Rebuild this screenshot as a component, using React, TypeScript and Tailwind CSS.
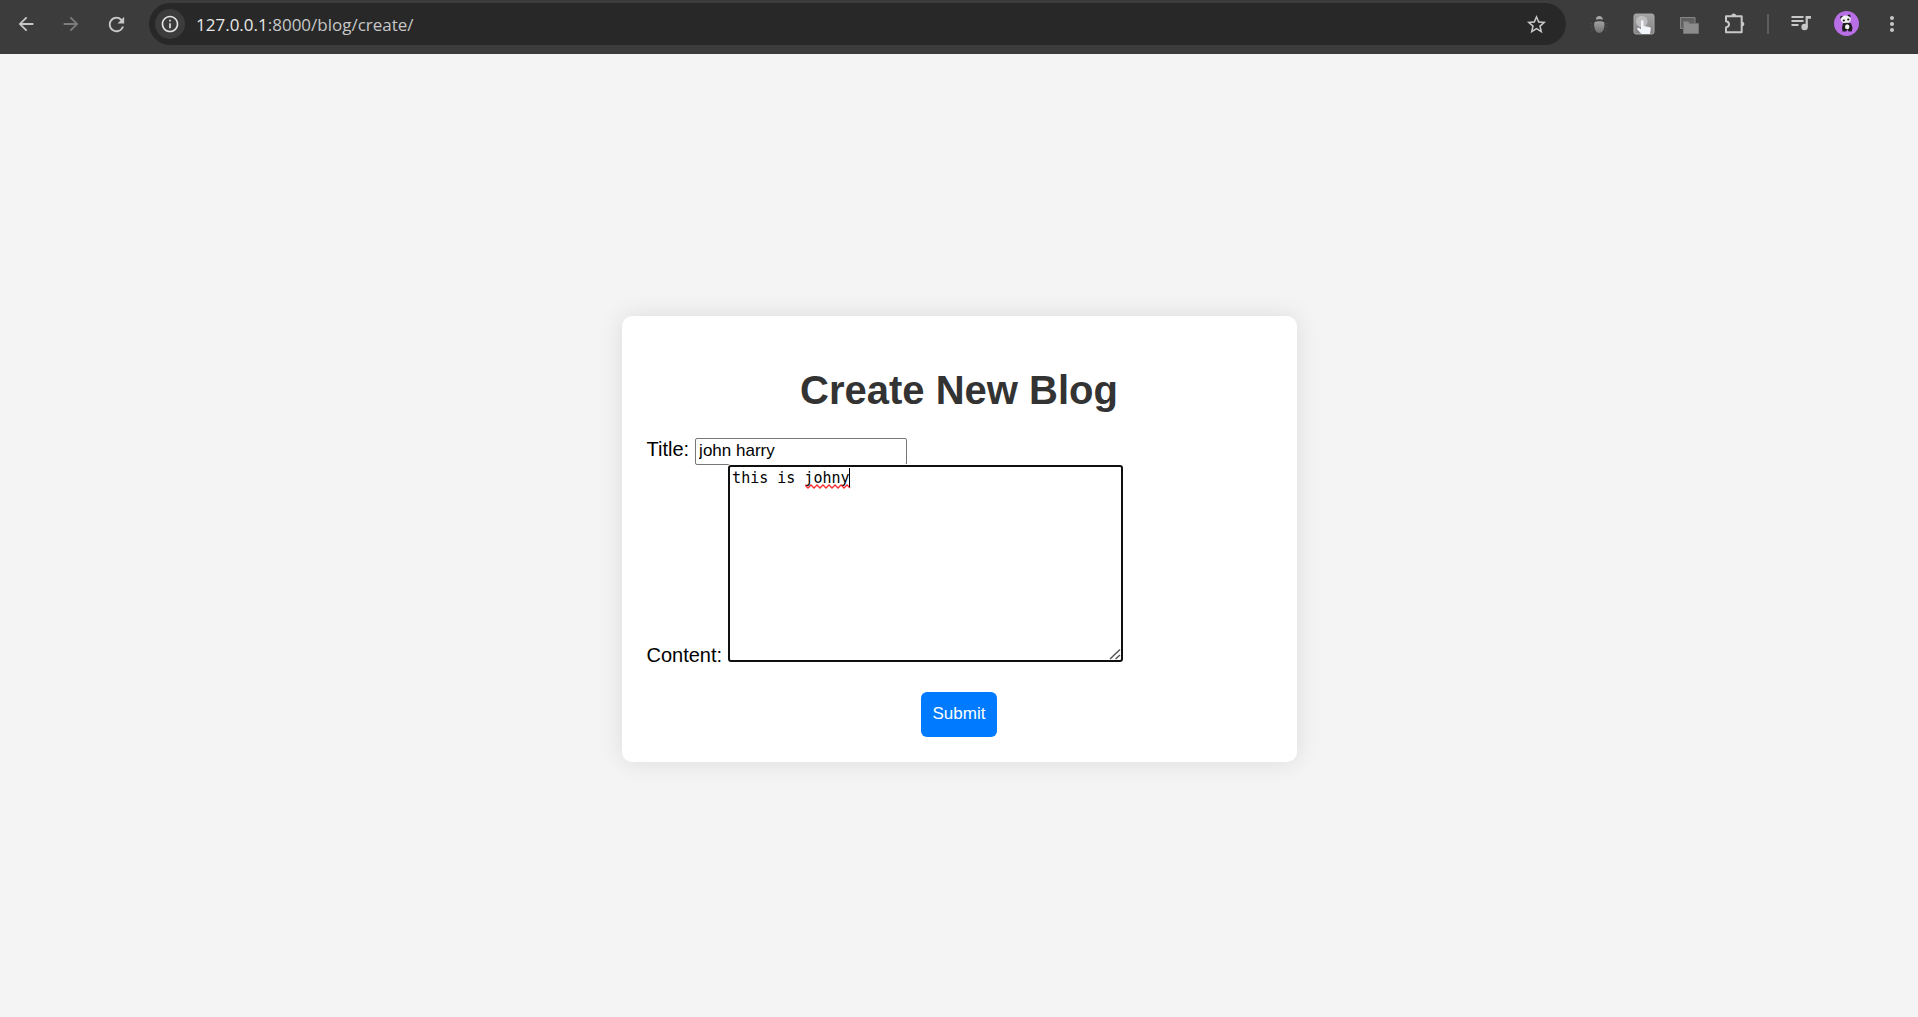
import React, { useEffect, useRef } from "react";
import {
  MdArrowBack,
  MdArrowForward,
  MdInfoOutline,
  MdMoreVert,
  MdRefresh,
  MdStarBorder,
} from "react-icons/md";

function BugIcon() {
  return (
    <svg viewBox="0 0 22 22" className="size-[22px] shrink-0" aria-hidden="true">
      <defs>
        <linearGradient id="bug-body" x1="0" y1="0" x2="0" y2="1">
          <stop offset="0" stopColor="#a2a2a2" />
          <stop offset="1" stopColor="#707070" />
        </linearGradient>
      </defs>
      <path d="M7.800 6.800C7.800 4.200 9.300 3 11.300 3s3.500 1.200 3.500 3.800c-1.500-.7-5.500-.7-7 0z" fill="#a6a6a6" />
      <path
        d="M6.500 9.300c1.800-1.300 7.800-1.300 9.600 0 .9 2 .4 10.700-4.800 10.700S5.600 11.300 6.500 9.300z"
        fill="url(#bug-body)"
      />
      <path
        d="M2.500 10.500l2 .5M2.500 14h2M3.500 17.500l1.500-1M19.500 10.500l-2 .5M19.500 14h-2M18.500 17.500l-1.500-1"
        stroke="#525252"
      />
    </svg>
  );
}

function TapIcon() {
  return (
    <svg viewBox="0 0 22 22" className="size-[22px] shrink-0" aria-hidden="true">
      <defs>
        <linearGradient id="tap-tile" x1="0" y1="0" x2="0" y2="1">
          <stop offset="0" stopColor="#a3a3a3" />
          <stop offset="1" stopColor="#828282" />
        </linearGradient>
      </defs>
      <rect x="1" y="1" width="20" height="20" rx="2" fill="url(#tap-tile)" stroke="#a8a8a8" />
      <circle cx="8.800" cy="8.500" r="5.800" fill="#bdbdbd" />
      <path
        d="M8 8.500c0-1.700 2.500-1.700 2.500 0V13l5.600.9c1.400.3 1.900 1.100 1.700 2.300l-.9 4.800H8.600l-4.200-4.500c-.8-1.100.5-2.200 1.600-1.500l2 1.300z"
        fill="#f2f5fb"
      />
    </svg>
  );
}

function WindowsIcon() {
  return (
    <svg viewBox="0 0 22 22" className="size-[22px] shrink-0" aria-hidden="true">
      <path d="M2.500 4.500h14.500v11H2.500z" fill="#606060" stroke="#868686" />
      <path d="M5.500 8.500h5l1 2h9v10h-15z" fill="#8c8c8c" stroke="#747474" />
    </svg>
  );
}

function PuzzleIcon() {
  return (
    <svg viewBox="0 0 24 24" className="size-6 shrink-0" aria-hidden="true">
      <path d="M9.300 4a2.400 2.400 0 0 1 4.800 0z M20 9.700a2.400 2.400 0 0 1 0 4.800z" fill="#c7c7c7" />
      <path
        d="M4 4.300h15.700v16H4v-4.900c1.900-.3 3-1.500 3-3.100s-1.100-2.800-3-3.100z"
        fill="none"
        stroke="#c7c7c7"
        strokeWidth="2"
        strokeLinejoin="round"
      />
    </svg>
  );
}

function MusicIcon() {
  return (
    <svg viewBox="0 0 24 24" className="size-6 shrink-0" aria-hidden="true">
      <path d="M1.500 5H13.500M1.500 9H13.500M1.500 13H8.500" stroke="#c7c7c7" strokeWidth="2" />
      <path d="M15.600 4h5.400v2.800h-3.200v8.200h-2.200z" fill="#c7c7c7" />
      <circle cx="14.600" cy="15" r="3.200" fill="#c7c7c7" />
    </svg>
  );
}

function PandaIcon() {
  return (
    <svg viewBox="0 0 26 26" className="size-[26px] shrink-0" aria-hidden="true">
      <circle cx="12.500" cy="12.500" r="12.500" fill="#b86fe6" />
      <circle cx="7.800" cy="6.300" r="1.600" fill="#1d1d1d" />
      <circle cx="15" cy="5" r="1.600" fill="#1d1d1d" />
      <ellipse cx="11.800" cy="8.400" rx="5" ry="3.900" fill="#f2f2f2" />
      <ellipse cx="9.800" cy="9.400" rx="1.200" ry="1" fill="#1d1d1d" />
      <ellipse cx="14.300" cy="8.400" rx="1.200" ry="1" fill="#1d1d1d" />
      <path d="M9 12.300c2-.8 6-.8 8 0l1.500 4.200-.8 4h-3l-1.200-2-1.500 2h-3.500l-.5-4z" fill="#1d1d1d" />
      <ellipse cx="13.200" cy="15.800" rx="2.200" ry="2.500" fill="#f2f2f2" />
    </svg>
  );
}

const slot = "flex w-[22px] items-center justify-center";

function BrowserBar() {
  return (
    <header className="flex h-[54px] items-start bg-[#3c3c3c] pt-[3px] pr-[15px] pl-[15px] text-[#c7c7c7]">
      <nav className="flex h-[42px] items-center gap-[23px]" aria-label="Browser navigation">
        <button type="button" aria-label="Back">
          <MdArrowBack className="size-[22px]" />
        </button>
        <button type="button" aria-label="Forward" className="text-[#7d7d7d]">
          <MdArrowForward className="size-[22px]" />
        </button>
        <button type="button" aria-label="Reload">
          <MdRefresh className="size-[23px]" />
        </button>
      </nav>
      <div className="ml-[21px] flex h-[42px] flex-1 items-center rounded-full bg-[#282828] pr-[18px] pl-[6px]">
        <button
          type="button"
          aria-label="Site information"
          className="flex size-[30px] items-center justify-center rounded-full bg-[#3c3c3c] text-[#e3e3e3]"
        >
          <MdInfoOutline className="size-5" />
        </button>
        <a href="#" className="ml-[11px] flex-1 pt-px font-['Open_Sans',sans-serif] text-[17px] text-[#c7c7c7]">
          <span className="text-[#e8e8e8]">127.0.0.1</span>:8000/blog/create/
        </a>
        <button type="button" aria-label="Bookmark this page">
          <MdStarBorder className="size-[23px]" />
        </button>
      </div>
      <div className="ml-[22px] flex h-[42px] items-center gap-[23px]">
        <button type="button" aria-label="Bug extension" className={slot}>
          <BugIcon />
        </button>
        <button type="button" aria-label="Tap extension" className={slot}>
          <TapIcon />
        </button>
        <button type="button" aria-label="Windows extension" className={slot}>
          <WindowsIcon />
        </button>
        <button type="button" aria-label="Extensions" className={slot}>
          <PuzzleIcon />
        </button>
        <span className="-mx-px h-5 w-[2px] bg-[#5e5e5e]" />
        <button type="button" aria-label="Media controls" className={slot}>
          <MusicIcon />
        </button>
        <button type="button" aria-label="Profile" className={slot}>
          <PandaIcon />
        </button>
        <button type="button" aria-label="Menu" className={slot}>
          <MdMoreVert className="size-6 shrink-0" />
        </button>
      </div>
    </header>
  );
}

export default function App() {
  const content = useRef<HTMLTextAreaElement>(null);

  useEffect(() => {
    const box = content.current;
    if (box) {
      box.focus();
      box.setSelectionRange(box.value.length, box.value.length);
    }
  }, []);

  return (
    <div className="flex min-h-screen flex-col bg-[#f4f4f4] font-['Liberation_Sans',Arial,sans-serif] text-xl text-black">
      <BrowserBar />
      <main className="flex flex-1 items-center justify-center pt-[7px]">
        <form
          className="w-full max-w-[675px] rounded-[10px] bg-white p-[25px] shadow-[0_0_25px_rgba(0,0,0,0.1)]"
          onSubmit={(event) => event.preventDefault()}
        >
          <h1 className="mt-[27px] mb-[25px] text-center text-[40px] leading-[45px] font-bold text-[#333333]">
            Create New Blog
          </h1>
          <div className="flex items-start">
            <label htmlFor="title" className="leading-[23px]">
              Title:
            </label>
            <input
              id="title"
              type="text"
              defaultValue="john harry"
              className="ml-[6px] h-[27px] w-[212px] rounded-[2px] border border-[#767676] bg-white px-[3px] pb-[2px] text-[17px] outline-none"
            />
          </div>
          <div className="flex items-end">
            <label htmlFor="content" className="h-[18px] leading-[23px]">
              Content:
            </label>
            <span className="relative ml-[6px] flex">
              <textarea
                id="content"
                ref={content}
                spellCheck={false}
                defaultValue="this is johny"
                className="h-[197px] w-[395px] resize-none rounded-[3px] border-2 border-[#101010] bg-white px-[2px] py-[1px] font-['DejaVu_Sans_Mono',monospace] text-[15px] leading-5 caret-transparent shadow-[0_0_0_1px_#ffffff] outline-none"
              />
              <svg
                viewBox="0 0 46 5"
                className="pointer-events-none absolute top-[19px] left-[77px] h-[5px] w-[46px]"
                aria-hidden="true"
              >
                <path
                  d="M0 1L3 4L6 1L9 4L12 1L15 4L18 1L21 4L24 1L27 4L30 1L33 4L36 1L39 4L42 1L45 4"
                  fill="none"
                  stroke="#ff2a2a"
                  strokeWidth="1.300"
                />
              </svg>
              <span className="pointer-events-none absolute top-[3px] left-[121px] h-[19px] w-px bg-black" />
              <svg
                viewBox="0 0 12 12"
                className="pointer-events-none absolute right-[2px] bottom-[2px] size-3"
                aria-hidden="true"
              >
                <path d="M1 11L11 1.500M6.500 11L11 7" fill="none" stroke="#555555" strokeWidth="1.500" />
              </svg>
            </span>
          </div>
          <div className="mt-[30px] flex justify-center">
            <button
              type="submit"
              className="h-[45px] rounded-[6px] bg-[#007bff] px-3 pb-px text-[17px] text-white"
            >
              Submit
            </button>
          </div>
        </form>
      </main>
    </div>
  );
}
